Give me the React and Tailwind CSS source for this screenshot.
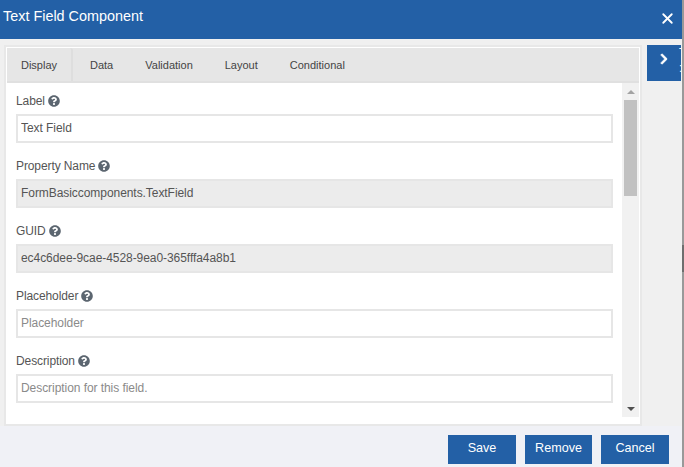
import { FaQuestionCircle, FaChevronRight } from "react-icons/fa";
import { X } from "lucide-react";

const fields = [
  { label: "Label", value: "Text Field" },
  { label: "Property Name", value: "FormBasiccomponents.TextField", disabled: true },
  { label: "GUID", value: "ec4c6dee-9cae-4528-9ea0-365fffa4a8b1", disabled: true },
  { label: "Placeholder", placeholder: "Placeholder" },
  { label: "Description", placeholder: "Description for this field." },
];

const tabs = ["Data", "Validation", "Layout", "Conditional"];

function Field({ label, value, placeholder, disabled }) {
  return (
    <div className="mb-[15px]">
      <div className="flex items-center gap-[3px] h-[16px] mb-[5px] text-[12px] tracking-[-0.1px] text-[#555]">
        {label}
        <FaQuestionCircle className="text-[12px] text-[#5c6670]" />
      </div>
      <input
        readOnly
        value={value}
        placeholder={placeholder}
        className={`block w-[597px] h-[29px] border-2 border-[#e6e6e6] px-[3px] pb-[1px] text-[12px] tracking-[-0.06px] text-[#555] placeholder:text-[#8a8a8a] outline-none ${
          disabled ? "bg-[#ececec]" : "bg-white"
        }`}
      />
    </div>
  );
}

export default function App() {
  return (
    <div className="w-[684px] h-[467px] flex overflow-hidden bg-white font-['Liberation_Sans',Arial,sans-serif]">
      <div className="w-[682px] h-full flex flex-col bg-[#f0f1f6]">
        <div className="h-[39px] shrink-0 bg-[#2360a6] flex justify-between pl-[3px] pr-[6px] text-white">
          <h1 className="text-[14.4px] leading-[33px]">Text Field Component</h1>
          <X size={17} strokeWidth={2.6} className="mt-[10px]" />
        </div>
        <div className="h-[387px] shrink-0 bg-[#f0f0f0] flex pt-[6px] pl-[4px]">
          <div className="w-[638px] h-[381px] border-2 border-[#e8e8e8] bg-white p-[1px]">
            <div className="h-[35px] flex bg-[#e6e6e6] border-b-2 border-[#e0e0e0] text-[11px] text-[#444]">
              <div className="w-[66px] h-[33px] pt-[2px] flex items-center justify-center border-r-2 border-[#dedede] rounded-t-[3px]">
                Display
              </div>
              <div className="flex items-center h-[33px] pt-[2px] pl-[17px] gap-[32px]">
                {tabs.map(tab => (
                  <span key={tab}>{tab}</span>
                ))}
              </div>
            </div>
            <div className="flex h-[334px]">
              <div className="w-[615px] h-full overflow-hidden pl-[9px] pt-[10px]">
                {fields.map(field => (
                  <Field key={field.label} {...field} />
                ))}
              </div>
              <div className="w-[17px] h-full bg-[#f1f1f1] flex flex-col items-center">
                <div className="h-[17px] flex items-center justify-center">
                  <svg width="8" height="4" viewBox="0 0 8 4" className="fill-[#a3a3a3]">
                    <path d="M4 0l4 4H0z" />
                  </svg>
                </div>
                <div className="w-[13px] h-[96px] bg-[#c1c1c1]" />
                <div className="flex-1" />
                <div className="h-[17px] flex items-center justify-center">
                  <svg width="8" height="4" viewBox="0 0 8 4" className="fill-[#505050]">
                    <path d="M0 0h8L4 4z" />
                  </svg>
                </div>
              </div>
            </div>
          </div>
          <div className="ml-[5px] w-[34px] h-[36px] bg-[#2360a6] flex text-white overflow-hidden pl-[11px] whitespace-nowrap">
            <FaChevronRight className="text-[12px] shrink-0 mt-[8px] stroke-current stroke-[30]" />
            <div className="ml-[9px] mt-[1px] text-[12px] leading-[15px]">
              T<br />:
            </div>
          </div>
        </div>
        <div className="flex-1 flex pt-[9px] pl-[448px] gap-[9px] text-white text-[12.6px]">
          <button className="w-[68px] h-[29px] pb-[3px] bg-[#2360a6]">Save</button>
          <button className="w-[67px] h-[29px] pb-[3px] bg-[#2360a6]">Remove</button>
          <button className="w-[68px] h-[29px] pb-[3px] bg-[#2360a6]">Cancel</button>
        </div>
      </div>
      <div className="w-[2px] h-full flex flex-col bg-[#999]">
        <div className="h-[245px]" />
        <div className="h-[27px] bg-[#6e6e6e]" />
      </div>
    </div>
  );
}
